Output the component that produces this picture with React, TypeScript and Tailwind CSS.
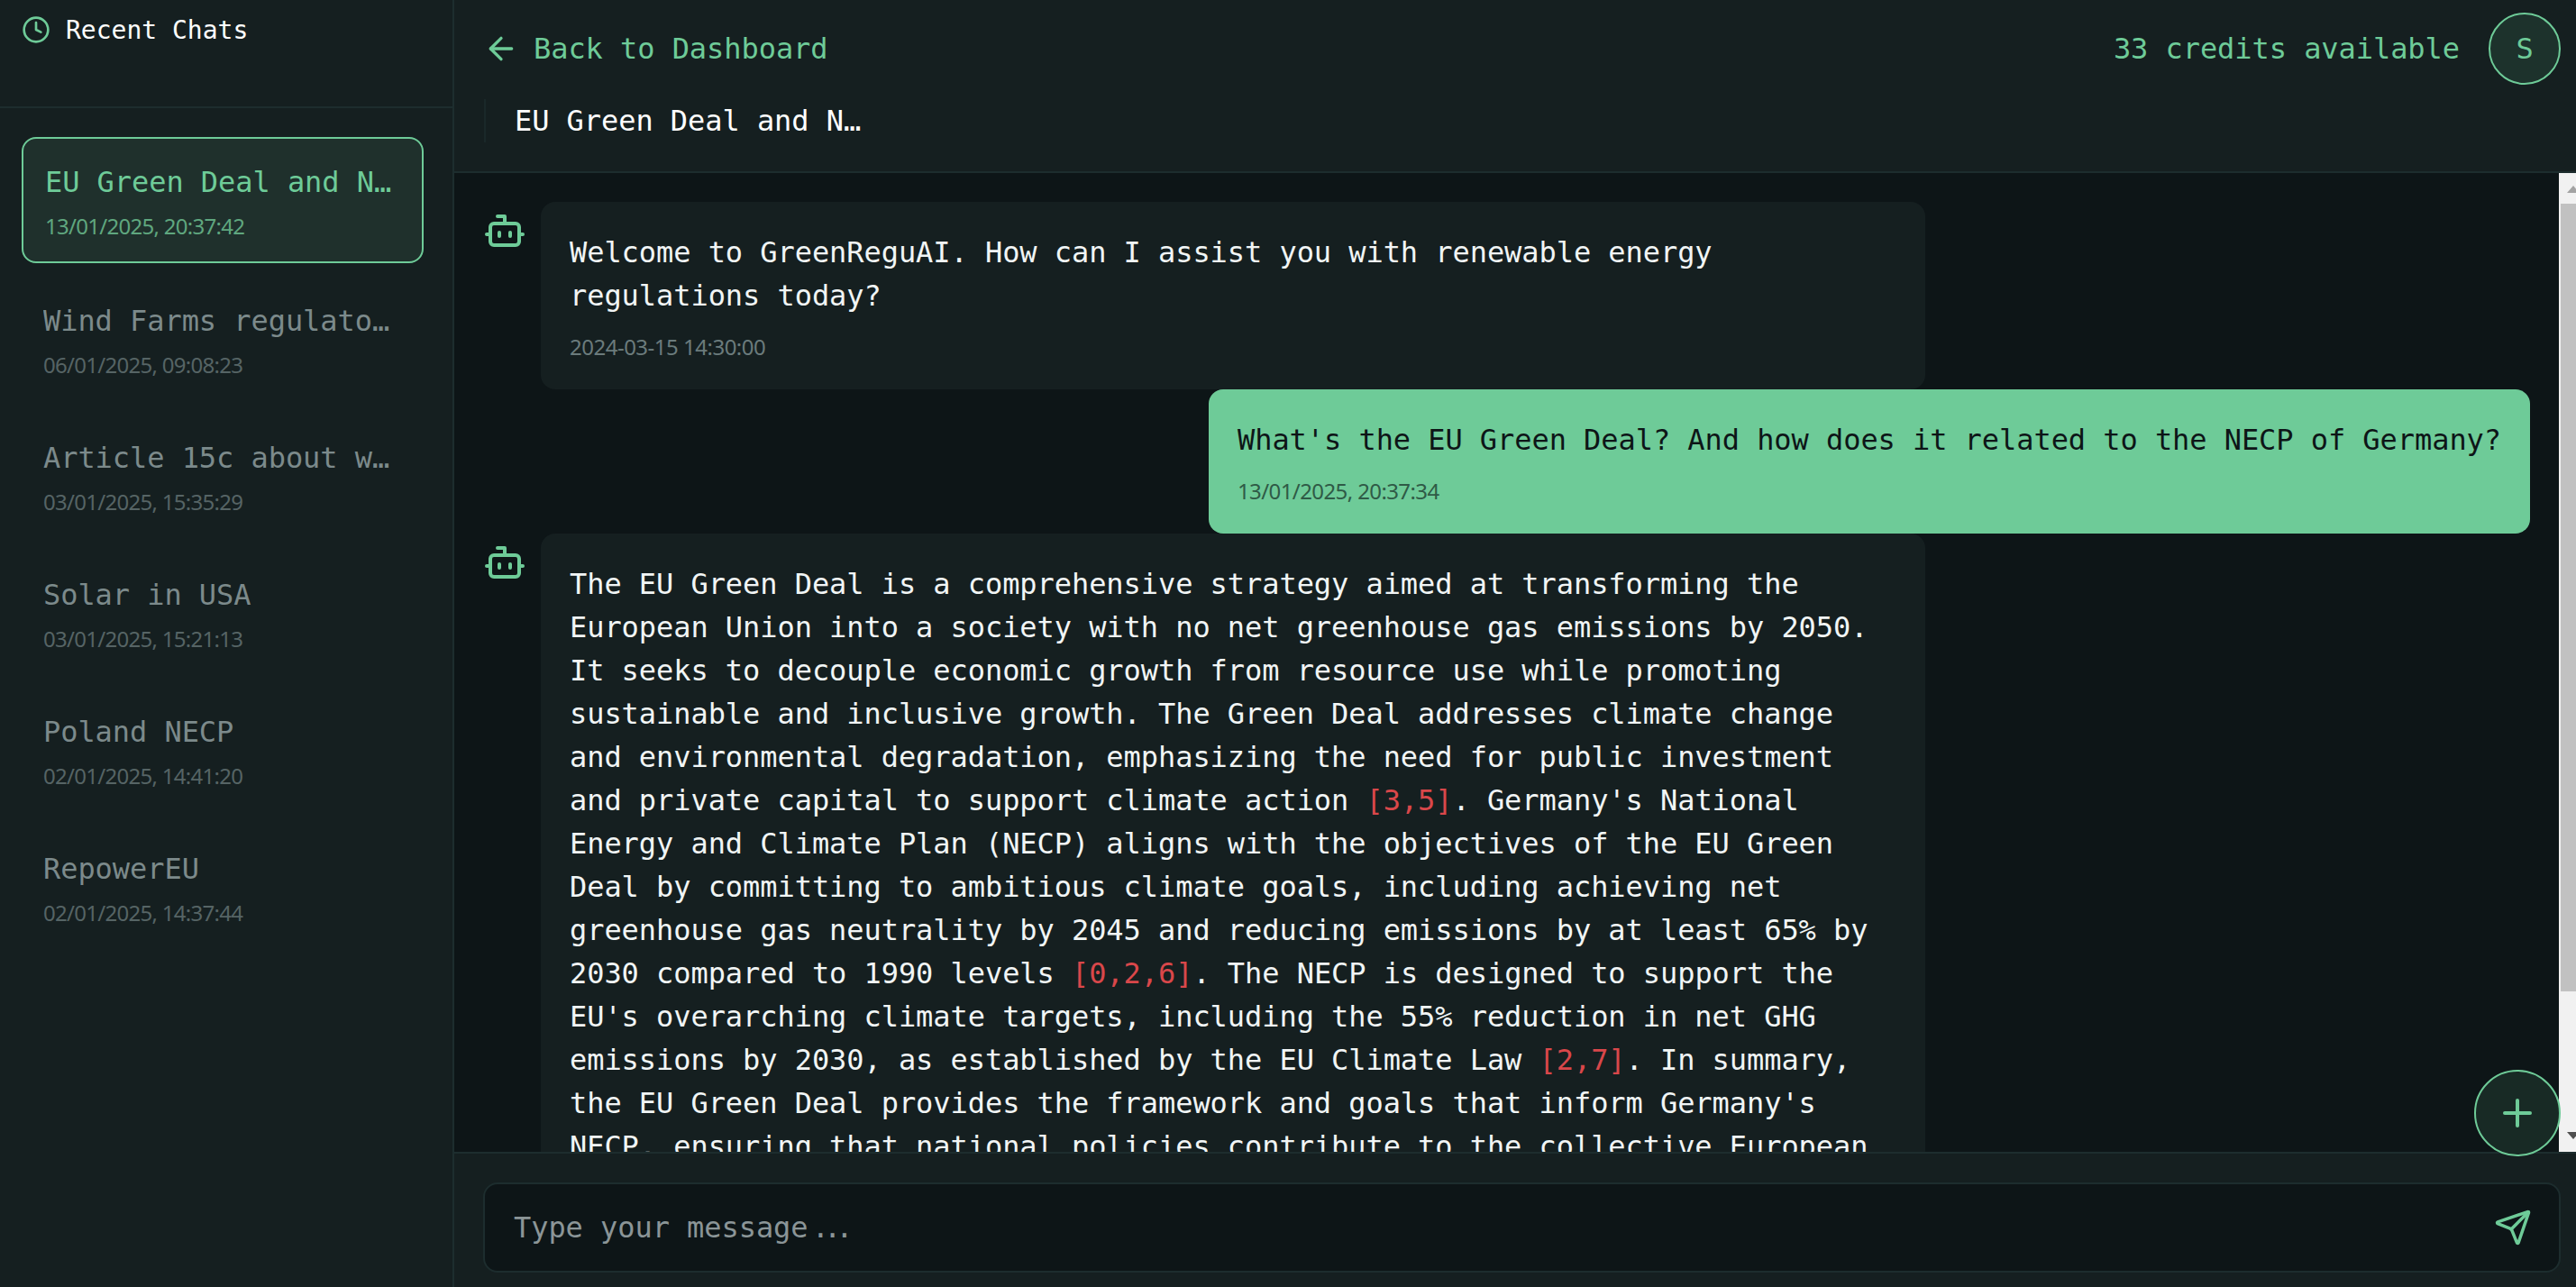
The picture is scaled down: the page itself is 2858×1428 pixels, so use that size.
import { ArrowLeft, Bot, Clock, Plus, Send } from "lucide-react";

const chats = [
  { title: "EU Green Deal and NECP of Germany", date: "13/01/2025, 20:37:42", active: true },
  { title: "Wind Farms regulatory framework", date: "06/01/2025, 09:08:23" },
  { title: "Article 15c about wind projects", date: "03/01/2025, 15:35:29" },
  { title: "Solar in USA", date: "03/01/2025, 15:21:13" },
  { title: "Poland NECP", date: "02/01/2025, 14:41:20" },
  { title: "RepowerEU", date: "02/01/2025, 14:37:44" },
];

const mono = "font-['DejaVu_Sans_Mono','Liberation_Mono',monospace] text-[32px] leading-[48px] tracking-[-0.06px]";
const stamp = "font-['Noto_Sans',sans-serif] text-[24px] leading-[32px] pt-[1px] mb-[-1px]";

function Cite({ children }: { children: string }) {
  return <span className="text-[#d9474a]">{children}</span>;
}

function Sidebar() {
  return (
    <aside className="w-[504px] shrink-0 h-full bg-[#151f20] border-r-2 border-[#1d2d2e] flex flex-col">
      <div className="h-[120px] shrink-0 border-b-2 border-[#1d2d2e] pl-6 pt-4 flex items-start gap-[17px]">
        <Clock className="w-8 h-8 mt-[1px] text-[#6ecb98] shrink-0" />
        <span className={`${mono} text-white !text-[28px] !leading-[36px] !tracking-normal`}>Recent Chats</span>
      </div>
      <div className="pl-6 pr-8 pt-8 flex flex-col gap-4">
        {chats.map((chat) => (
          <div
            key={chat.date}
            className={`rounded-2xl p-6 ${chat.active ? "bg-[#1f302c] border-2 border-[#6ecb98]" : ""}`}
          >
            <div className={`${mono} truncate ${chat.active ? "text-[#6ecb98]" : "text-[#7c8a8b]"}`}>{chat.title}</div>
            <div className={`${stamp} tracking-[-0.72px] mt-2 ${chat.active ? "text-[#5fa77f]" : "text-[#566465]"}`}>
              {chat.date}
            </div>
          </div>
        ))}
      </div>
    </aside>
  );
}

function Header() {
  return (
    <header className="h-[192px] shrink-0 bg-[#151f20] border-b-2 border-[#1d2d2e] pl-8 pr-[17px] pt-[14px]">
      <div className="flex items-center justify-between h-20">
        <div className={`flex items-center gap-4 text-[#6ecb98] ${mono}`}>
          <ArrowLeft className="w-10 h-10" />
          <span>Back to Dashboard</span>
        </div>
        <div className="flex items-center gap-8">
          <span className={`${mono} text-[#6ecb98]`}>33 credits available</span>
          <div className={`${mono} w-20 h-20 rounded-full bg-[#1d322c] border-2 border-[#6ecb98] text-[#6ecb98] flex items-center justify-center`}>
            S
          </div>
        </div>
      </div>
      <div className="mt-4 border-l-2 border-[#1a2829] pl-8 ml-[1px] w-[436px]">
        <div className={`${mono} text-white truncate`}>EU Green Deal and NECP of Germany</div>
      </div>
    </header>
  );
}

function BotMessage({ children, stampText }: { children: React.ReactNode; stampText?: string }) {
  return (
    <div className="flex items-start gap-4">
      <Bot className="w-12 h-12 mt-2 text-[#6ecb98] shrink-0" />
      <div className={`${mono} w-[1536px] shrink-0 rounded-2xl bg-[#151f20] p-8 text-[#f1f5f5]`}>
        <p>{children}</p>
        {stampText && <div className={`${stamp} tracking-[-0.5px] mt-4 text-[#6b7b7c]`}>{stampText}</div>}
      </div>
    </div>
  );
}

function Scrollbar() {
  return (
    <div className="w-[19px] shrink-0 bg-[#f1f1f1] flex flex-col overflow-hidden">
      <div className="h-[34px] shrink-0 pl-[9px] pt-[14px]">
        <div className="w-0 h-0 border-x-[7px] border-x-transparent border-b-[8px] border-b-[#a3a3a3]" />
      </div>
      <div className="h-[874px] shrink-0 ml-[2px] bg-[#c1c1c1]" />
      <div className="flex-1" />
      <div className="h-[34px] shrink-0 pl-[9px] pt-[12px]">
        <div className="w-0 h-0 border-x-[7px] border-x-transparent border-t-[8px] border-t-[#505050]" />
      </div>
    </div>
  );
}

export default function App() {
  return (
    <div className="w-[2858px] h-[1428px] overflow-hidden flex bg-[#0d1517]">
      <Sidebar />
      <main className="flex-1 min-w-0 flex flex-col relative">
        <Header />
        <div className="h-[1086px] shrink-0 flex">
          <div className="flex-1 min-w-0 overflow-hidden pl-8 pr-8 pt-8">
            <BotMessage stampText="2024-03-15 14:30:00">
              Welcome to GreenReguAI. How can I assist you with renewable energy regulations today?
            </BotMessage>
            <div className="flex justify-end">
              <div className={`${mono} rounded-2xl bg-[#6ecb98] p-8 text-[#0d1517]`}>
                <p>What's the EU Green Deal? And how does it related to the NECP of Germany?</p>
                <div className={`${stamp} tracking-[-0.6px] mt-4 text-[#2f5a46]`}>13/01/2025, 20:37:34</div>
              </div>
            </div>
            <BotMessage>
              The EU Green Deal is a comprehensive strategy aimed at transforming the European Union into a society
              with no net greenhouse gas emissions by 2050. It seeks to decouple economic growth from resource use
              while promoting sustainable and inclusive growth. The Green Deal addresses climate change and
              environmental degradation, emphasizing the need for public investment and private capital to support
              climate action <Cite>[3,5]</Cite>. Germany's National Energy and Climate Plan (NECP) aligns with the
              objectives of the EU Green Deal by committing to ambitious climate goals, including achieving net
              greenhouse gas neutrality by 2045 and reducing emissions by at least 65% by 2030 compared to 1990 levels{" "}
              <Cite>[0,2,6]</Cite>. The NECP is designed to support the EU's overarching climate targets, including
              the 55% reduction in net GHG emissions by 2030, as established by the EU Climate Law <Cite>[2,7]</Cite>.
              In summary, the EU Green Deal provides the framework and goals that inform Germany's NECP, ensuring that
              national policies contribute to the collective European climate objectives.
            </BotMessage>
          </div>
          <Scrollbar />
        </div>
        <div className="flex-1 bg-[#151f20] border-t-2 border-[#1d2d2e] pl-8 pr-[17px] pt-8">
          <div className="h-[100px] rounded-2xl bg-[#0d1517] border-2 border-[#1d2d2e] flex items-center pl-8 pr-[30px]">
            <div className={`${mono} flex-1 text-[#8b9597]`}>
              Type your message <span className="ml-[-15px] tracking-[-6px]">...</span>
            </div>
            <Send className="w-[42px] h-[42px] text-[#6ecb98]" />
          </div>
        </div>
        <button className="absolute right-[17px] bottom-[145px] w-24 h-24 rounded-full bg-[#182a25] border-2 border-[#6ecb98] text-[#6ecb98] flex items-center justify-center">
          <Plus className="w-12 h-12" />
        </button>
      </main>
    </div>
  );
}
